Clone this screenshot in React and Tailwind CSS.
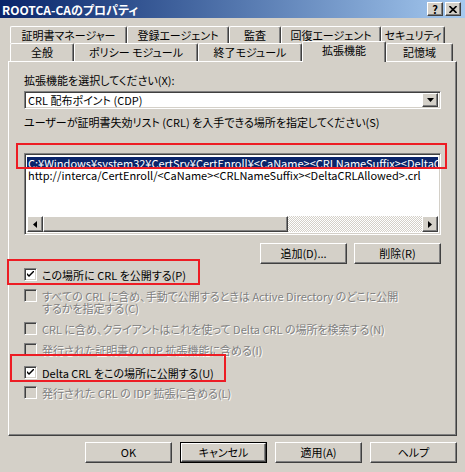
const raised =
  "bg-[#d4d0c8] border border-t-white border-l-white border-r-[#404040] border-b-[#404040] shadow-[inset_-1px_-1px_#808080]";
const sunken =
  "border border-t-[#808080] border-l-[#808080] border-r-white border-b-white shadow-[inset_1px_1px_#404040,inset_-1px_-1px_#d4d0c8]";

const topTabs = [
  { label: "証明書マネージャー", w: "w-[117px]" },
  { label: "登録エージェント", w: "w-[102px]" },
  { label: "監査", w: "w-[52px]" },
  { label: "回復エージェント", w: "w-[100px]" },
  { label: "セキュリティ", w: "w-[64px]" },
];

const bottomTabs = [
  { label: "全般", w: "w-[64px]" },
  { label: "ポリシー モジュール", w: "w-[124px]" },
  { label: "終了モジュール", w: "w-[104px]" },
  { label: "拡張機能", w: "w-[84px]", active: true },
  { label: "記憶域", w: "w-[67px]" },
];

function Tab({ label, w, active }) {
  if (active) {
    return (
      <div
        className={`${w} relative z-10 -mt-[2px] h-[21px] -mb-[1px] flex items-center justify-center whitespace-nowrap bg-[#d4d0c8] border-t border-l border-r border-t-white border-l-white border-r-[#404040] rounded-tl-[2px] rounded-tr-[2px] shadow-[inset_-1px_0_#808080] pb-[3px]`}
      >
        {label}
      </div>
    );
  }
  return (
    <div
      className={`${w} h-full flex items-center justify-center whitespace-nowrap border-t border-l border-r border-t-white border-l-white border-r-[#404040] rounded-tl-[2px] rounded-tr-[2px] shadow-[inset_-1px_0_#808080]`}
    >
      {label}
    </div>
  );
}

function CheckBox({ checked, disabled }) {
  return (
    <div
      className={`${sunken} w-[13px] h-[13px] shrink-0 flex items-center justify-center ${
        disabled ? "bg-[#d4d0c8]" : "bg-white"
      }`}
    >
      {checked && (
        <svg width="7" height="7" viewBox="0 0 7 7">
          <path d="M0 2 V4 L2 6 L7 1 V-1 L2 4 Z" fill="#000" />
        </svg>
      )}
    </div>
  );
}

function Option({ checked, disabled, children, className = "" }) {
  return (
    <div className={`flex items-start gap-[5px] ${className}`}>
      <CheckBox checked={checked} disabled={disabled} />
      <div
        className={`leading-[12px] pt-[1px] whitespace-nowrap ${
          disabled ? "text-[#808080] [text-shadow:1px_1px_0_#fff]" : "text-black"
        }`}
      >
        {children}
      </div>
    </div>
  );
}

function Button({ children, isDefault }) {
  const btn = (
    <div className={`${raised} w-full h-full flex items-center justify-center`}>
      {children}
    </div>
  );
  if (isDefault) {
    return <div className="w-[87px] h-[21px] border border-black">{btn}</div>;
  }
  return <div className="w-[87px] h-[21px]">{btn}</div>;
}

export default function App() {
  return (
    <div className="w-[465px] h-[472px] bg-[#d4d0c8] overflow-hidden flex flex-col text-[11px] text-black font-['Noto_Sans_CJK_JP',sans-serif] [font-feature-settings:'palt'] leading-[13px]">
      {/* Title bar */}
      <div className="h-[18px] shrink-0 flex items-center justify-between pl-[2px] pr-[4px] bg-gradient-to-r from-[#0a246a] to-[#a6caf0]">
        <span className="text-white font-bold text-[12px]">
          ROOTCA-CAのプロパティ
        </span>
        <div className="flex gap-[2px]">
          <div className={`${raised} w-[16px] h-[14px] flex items-center justify-center font-bold text-[11px] leading-none`}>
            ?
          </div>
          <div className={`${raised} w-[16px] h-[14px] flex items-center justify-center`}>
            <svg width="8" height="7" viewBox="0 0 8 7">
              <path d="M0.5 0 L7.5 7 M7.5 0 L0.5 7" stroke="#000" strokeWidth="1.6" />
            </svg>
          </div>
        </div>
      </div>

      {/* Tabs */}
      <div className="mt-[8px] pl-[10px] flex h-[17px]">
        {topTabs.map((t) => (
          <Tab key={t.label} {...t} />
        ))}
      </div>
      <div className="pl-[10px] flex h-[18px]">
        {bottomTabs.map((t) => (
          <Tab key={t.label} {...t} />
        ))}
      </div>

      {/* Panel */}
      <div className="relative mx-[8px] h-[375px] border border-t-white border-l-white border-r-[#404040] border-b-[#404040] shadow-[inset_-1px_-1px_#808080] pl-[15px] flex flex-col">
        <div className="mt-[12px] h-[13px]">拡張機能を選択してください(X):</div>

        <div className={`${sunken} mt-[4px] w-[417px] h-[18px] bg-white flex items-center justify-between pl-[3px] pr-[2px]`}>
          <span>CRL 配布ポイント (CDP)</span>
          <div className={`${raised} w-[16px] h-[14px] flex items-center justify-center`}>
            <svg width="7" height="4" viewBox="0 0 7 4">
              <path d="M0 0 H7 L3.5 4 Z" fill="#000" />
            </svg>
          </div>
        </div>

        <div className="mt-[7px] h-[13px]">
          ユーザーが証明書失効リスト (CRL) を入手できる場所を指定してください(S)
        </div>

        {/* List box */}
        <div className={`${sunken} mt-[24px] w-[417px] h-[82px] bg-white p-[2px] flex flex-col`}>
          <div className="flex-1 overflow-hidden whitespace-nowrap">
            <div className="h-[12px] mt-[1px] bg-[#0a246a] text-white pl-[1px] leading-[12px]">
              C:¥Windows¥system32¥CertSrv¥CertEnroll¥&lt;CaName&gt;&lt;CRLNameSuffix&gt;&lt;DeltaCRLAllowed&gt;.crl
            </div>
            <div className="h-[13px] pl-[1px] leading-[13px]">
              http://interca/CertEnroll/&lt;CaName&gt;&lt;CRLNameSuffix&gt;&lt;DeltaCRLAllowed&gt;.crl
            </div>
          </div>
          {/* Horizontal scrollbar */}
          <div className="h-[16px] flex">
            <div className={`${raised} w-[16px] h-[16px] flex items-center justify-center`}>
              <svg width="4" height="7" viewBox="0 0 4 7">
                <path d="M4 0 V7 L0 3.5 Z" fill="#000" />
              </svg>
            </div>
            <div className="flex-1 flex bg-[repeating-conic-gradient(#ffffff_0_25%,#d4d0c8_0_50%)] bg-[length:2px_2px]">
              <div className={`${raised} w-[245px] h-[16px]`} />
            </div>
            <div className={`${raised} w-[16px] h-[16px] flex items-center justify-center`}>
              <svg width="4" height="7" viewBox="0 0 4 7">
                <path d="M0 0 V7 L4 3.5 Z" fill="#000" />
              </svg>
            </div>
          </div>
        </div>

        <div className="mt-[8px] w-[417px] flex justify-end gap-[7px]">
          <Button>追加(D)...</Button>
          <Button>削除(R)</Button>
        </div>

        <Option checked className="mt-[4px]">この場所に CRL を公開する(P)</Option>
        <Option disabled className="mt-[8px]">
          すべての CRL に含め、手動で公開するときは Active Directory のどこに公開
          <br />
          するかを指定する(C)
        </Option>
        <Option disabled className="mt-[8px]">
          CRL に含め、クライアントはこれを使って Delta CRL の場所を検索する(N)
        </Option>
        <Option disabled className="mt-[8px]">発行された証明書の CDP 拡張機能に含める(I)</Option>
        <Option checked className="mt-[10px]">Delta CRL をこの場所に公開する(U)</Option>
        <Option disabled className="mt-[7px]">発行された CRL の IDP 拡張に含める(L)</Option>

        {/* Red annotation boxes */}
        <div className="absolute left-[7px] top-[81px] w-[431px] h-[26px] border-2 border-[#ed1c24]" />
        <div className="absolute -left-[2px] top-[197px] w-[193px] h-[26px] border-2 border-[#ed1c24]" />
        <div className="absolute left-[1px] top-[292px] w-[216px] h-[28px] border-2 border-[#ed1c24]" />
      </div>

      {/* Dialog buttons */}
      <div className="mt-[6px] pr-[8px] flex justify-end gap-[8px]">
        <Button>OK</Button>
        <Button isDefault>キャンセル</Button>
        <Button>適用(A)</Button>
        <Button>ヘルプ</Button>
      </div>
    </div>
  );
}
